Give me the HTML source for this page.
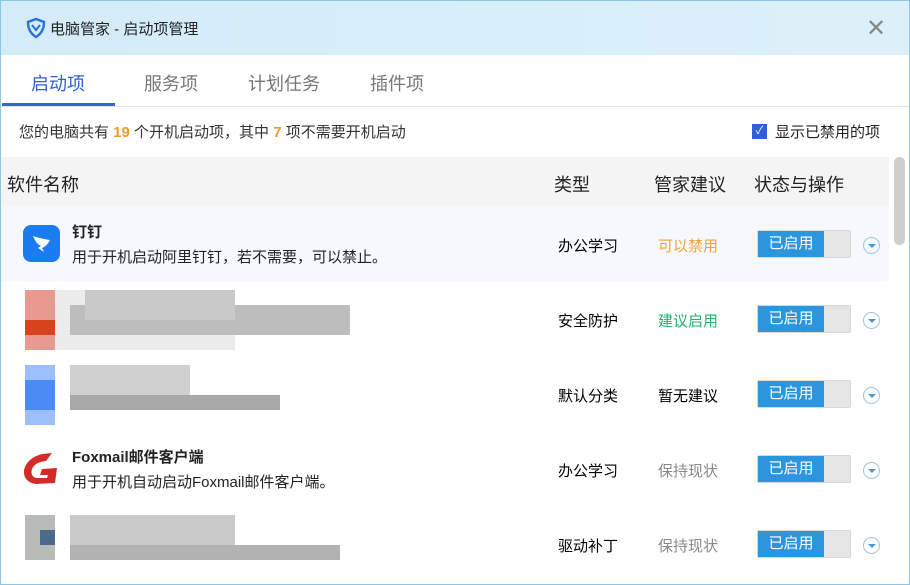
<!DOCTYPE html>
<html><head><meta charset="utf-8"><style>
*{margin:0;padding:0;box-sizing:border-box}
body{width:910px;height:585px;overflow:hidden;font-family:"Liberation Sans","Noto Sans CJK SC",sans-serif;background:#fff;position:relative}
.abs{position:absolute}
.title{left:0;top:0;width:910px;height:55px;background:linear-gradient(90deg,#d3ecf8,#dcf0f9)}
.tabs span{position:absolute;top:70px;font-size:18px;color:#777}
.row{position:absolute;left:1px;width:888px;height:75px}
.c{position:absolute;font-size:15px}
.btn{position:absolute;left:757px;width:94px;height:28px;background:#e6e6e6;border:1px solid #d8d8d8;border-radius:2px}
.btn b{position:absolute;left:0;top:0;width:66px;height:26px;background:#2b95dd;color:#fff;font-weight:normal;font-size:15px;text-align:center;line-height:26px}
.dd{position:absolute;left:863px;width:17px;height:17px;border:1px solid #9cc7e6;border-radius:50%}
.dd:after{content:"";position:absolute;left:4px;top:6px;border-left:4px solid transparent;border-right:4px solid transparent;border-top:4px solid #4a9ad8}
</style></head><body>
<div class="abs title"></div>
<div class="abs" style="left:0;top:0;width:910px;height:585px;border:1px solid #8ec5e0;z-index:5;pointer-events:none"></div>
<svg class="abs" style="left:25px;top:17px" width="22" height="22" viewBox="0 0 22 22"><path d="M11 2 L19 5 Q19 15 11 20 Q3 15 3 5 Z" fill="none" stroke="#2a6fdb" stroke-width="2.4"/><path d="M7 8 L11 13 L15 8" fill="none" stroke="#2a6fdb" stroke-width="2"/></svg>
<div class="abs" style="left:50px;top:18px;font-size:15px;color:#222">电脑管家 - 启动项管理</div>
<div class="abs" style="left:866px;top:14px;font-size:24px;color:#888;font-weight:200">✕</div>
<div class="tabs"><span style="left:31px;color:#2f5fd6">启动项</span><span style="left:144px">服务项</span><span style="left:248px">计划任务</span><span style="left:370px">插件项</span></div>
<div class="abs" style="left:2px;top:103px;width:113px;height:3px;background:#3663d8"></div>
<div class="abs" style="left:0;top:106px;width:910px;height:1px;background:#e2e2e2"></div>
<div class="abs" style="left:19px;top:121px;font-size:15px;color:#333">您的电脑共有 <b style="color:#f39a2b">19</b> 个开机启动项，其中 <b style="color:#f39a2b">7</b> 项不需要开机启动</div>
<div class="abs" style="left:752px;top:124px;width:15px;height:15px;background:#2e5fd9;color:#fff;font-size:11px;text-align:center;line-height:15px">✓</div>
<div class="abs" style="left:775px;top:121px;font-size:15px;color:#222">显示已禁用的项</div>
<div class="abs" style="left:1px;top:157px;width:888px;height:50px;background:#f4f4f4"></div>
<div class="abs" style="left:894px;top:157px;width:11px;height:88px;background:#cfcfcf;border-radius:5px"></div>
<div class="abs" style="left:7px;top:171px;font-size:18px;color:#222">软件名称</div>
<div class="abs" style="left:554px;top:171px;font-size:18px;color:#222">类型</div>
<div class="abs" style="left:654px;top:171px;font-size:18px;color:#222">管家建议</div>
<div class="abs" style="left:754px;top:171px;font-size:18px;color:#222">状态与操作</div>

<div class="row" style="top:207px;background:#f5f8fc"></div>
<div class="abs" style="left:23px;top:225px;width:37px;height:37px;border-radius:8px;background:#1a7cf2"></div>
<svg class="abs" style="left:28px;top:230px" width="27" height="27" viewBox="0 0 27 27"><path d="M5 6 Q14 9 22 10 Q19 16 14 18 L16 22 L10 18 L13 16 Q8 14 5 6Z" fill="#fff"/></svg>
<div class="abs" style="left:72px;top:221px;font-size:15px;font-weight:bold;color:#222">钉钉</div>
<div class="abs" style="left:72px;top:246px;font-size:15px;color:#222">用于开机启动阿里钉钉，若不需要，可以禁止。</div>

<svg class="abs" style="left:22px;top:450px" width="37" height="38" viewBox="0 0 37 38"><path d="M30 3 L20 4 Q5 8 2 20 Q1 32 14 34 L33 33 L35 18 L20 19 L18 25 L26 25 L25 28 L14 28 Q8 26 10 19 Q13 12 24 11 Z" fill="#d42a2a"/></svg>
<div class="abs" style="left:72px;top:446px;font-size:15px;font-weight:bold;color:#222">Foxmail邮件客户端</div>
<div class="abs" style="left:72px;top:471px;font-size:15px;color:#222">用于开机自动启动Foxmail邮件客户端。</div>

<div class="abs" style="left:25px;top:290px;width:210px;height:60px;background:#e0e0e0;opacity:.6"></div>
<div class="abs" style="left:70px;top:305px;width:280px;height:30px;background:#bdbdbd"></div>
<div class="abs" style="left:25px;top:290px;width:30px;height:60px;background:#e89a90"></div>
<div class="abs" style="left:25px;top:320px;width:30px;height:15px;background:#d8431e"></div>
<div class="abs" style="left:85px;top:290px;width:150px;height:30px;background:#c9c9c9"></div>
<div class="abs" style="left:25px;top:365px;width:30px;height:60px;background:#9cc0fb"></div>
<div class="abs" style="left:25px;top:380px;width:30px;height:30px;background:#4a8cf4"></div>
<div class="abs" style="left:70px;top:365px;width:120px;height:45px;background:#d0d0d0"></div>
<div class="abs" style="left:70px;top:395px;width:210px;height:15px;background:#a9a9a9"></div>
<div class="abs" style="left:25px;top:515px;width:30px;height:45px;background:#b8bcb8"></div>
<div class="abs" style="left:40px;top:530px;width:15px;height:15px;background:#4c6a8c"></div>
<div class="abs" style="left:70px;top:515px;width:165px;height:30px;background:#cacaca"></div>
<div class="abs" style="left:70px;top:545px;width:270px;height:15px;background:#b2b2b2"></div>

<div class="c" style="left:558px;top:235px">办公学习</div><div class="c" style="left:658px;top:235px;color:#f3a33b">可以禁用</div>
<div class="c" style="left:558px;top:310px">安全防护</div><div class="c" style="left:658px;top:310px;color:#1fb36b">建议启用</div>
<div class="c" style="left:558px;top:385px">默认分类</div><div class="c" style="left:658px;top:385px">暂无建议</div>
<div class="c" style="left:558px;top:460px">办公学习</div><div class="c" style="left:658px;top:460px;color:#888">保持现状</div>
<div class="c" style="left:558px;top:535px">驱动补丁</div><div class="c" style="left:658px;top:535px;color:#888">保持现状</div>

<div class="btn" style="top:230px"><b>已启用</b></div><div class="dd" style="top:237px"></div>
<div class="btn" style="top:305px"><b>已启用</b></div><div class="dd" style="top:312px"></div>
<div class="btn" style="top:380px"><b>已启用</b></div><div class="dd" style="top:387px"></div>
<div class="btn" style="top:455px"><b>已启用</b></div><div class="dd" style="top:462px"></div>
<div class="btn" style="top:530px"><b>已启用</b></div><div class="dd" style="top:537px"></div>
</body></html>
